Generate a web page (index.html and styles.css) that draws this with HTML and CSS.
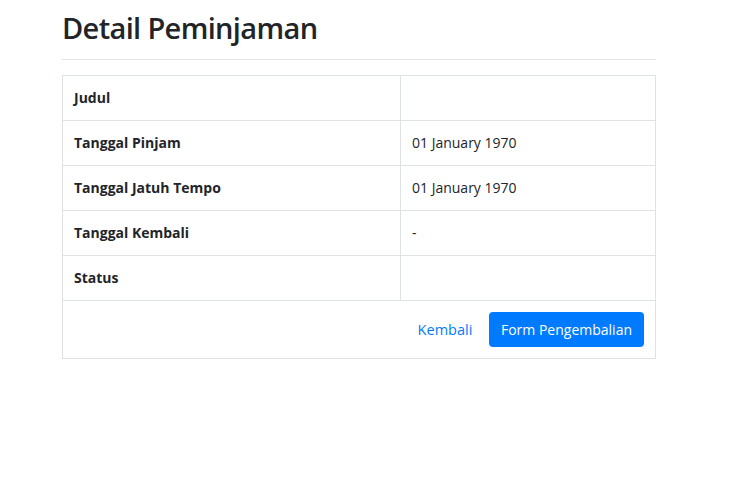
FILE: index.html
```html
<!DOCTYPE html>
<html lang="id">
<head>
<meta charset="utf-8">
<title>Detail Peminjaman</title>
<link rel="stylesheet" href="styles.css">
</head>
<body>
<div class="container">
  <h2 class="title">Detail Peminjaman</h2>
  <table class="detail">
    <tbody>
      <tr><th>Judul</th><td></td></tr>
      <tr><th>Tanggal Pinjam</th><td>01 January 1970</td></tr>
      <tr><th>Tanggal Jatuh Tempo</th><td>01 January 1970</td></tr>
      <tr><th>Tanggal Kembali</th><td>-</td></tr>
      <tr><th>Status</th><td></td></tr>
      <tr><td colspan="2" class="actions">
        <a href="#" class="link">Kembali</a>
        <a href="#" class="btn">Form Pengembalian</a>
      </td></tr>
    </tbody>
  </table>
</div>
</body>
</html>
```
FILE: styles.css
```css
html, body { margin: 0; padding: 0; background: #fff; }
body {
  font-family: "Open Sans", "Noto Sans", sans-serif;
  color: #212529;
  font-size: 14px;
}
.container {
  width: 594px;
  margin-left: 62px;
  padding-top: 11px;
}
.title {
  font-size: 29px;
  font-weight: 600;
  line-height: 1.2;
  margin: 0 0 15px;
  padding-bottom: 13px;
  border-bottom: 1px solid #e3e5e8;
  letter-spacing: -0.65px;
}
.detail {
  width: 100%;
  border-collapse: collapse;
  border: 1px solid #dee2e6;
}
.detail th, .detail td {
  border: 1px solid #dee2e6;
  padding: 12px 12px 12px 11px;
  line-height: 20px;
  text-align: left;
  font-size: 14px;
}
.detail td { padding-left: 11px; }
.detail th { width: 314px; font-weight: 700; }
.detail td.actions {
  text-align: right;
  padding: 11px 11px 11px;
}
.link {
  color: #007bff;
  text-decoration: none;
  display: inline-block;
  margin-right: 13px;
  font-size: 14.5px;
}
.btn {
  display: inline-block;
  background: #007bff;
  color: #fff;
  text-decoration: none;
  padding: 6px 12px;
  border-radius: 4px;
  line-height: 23px;
  font-size: 14px;
}
```
